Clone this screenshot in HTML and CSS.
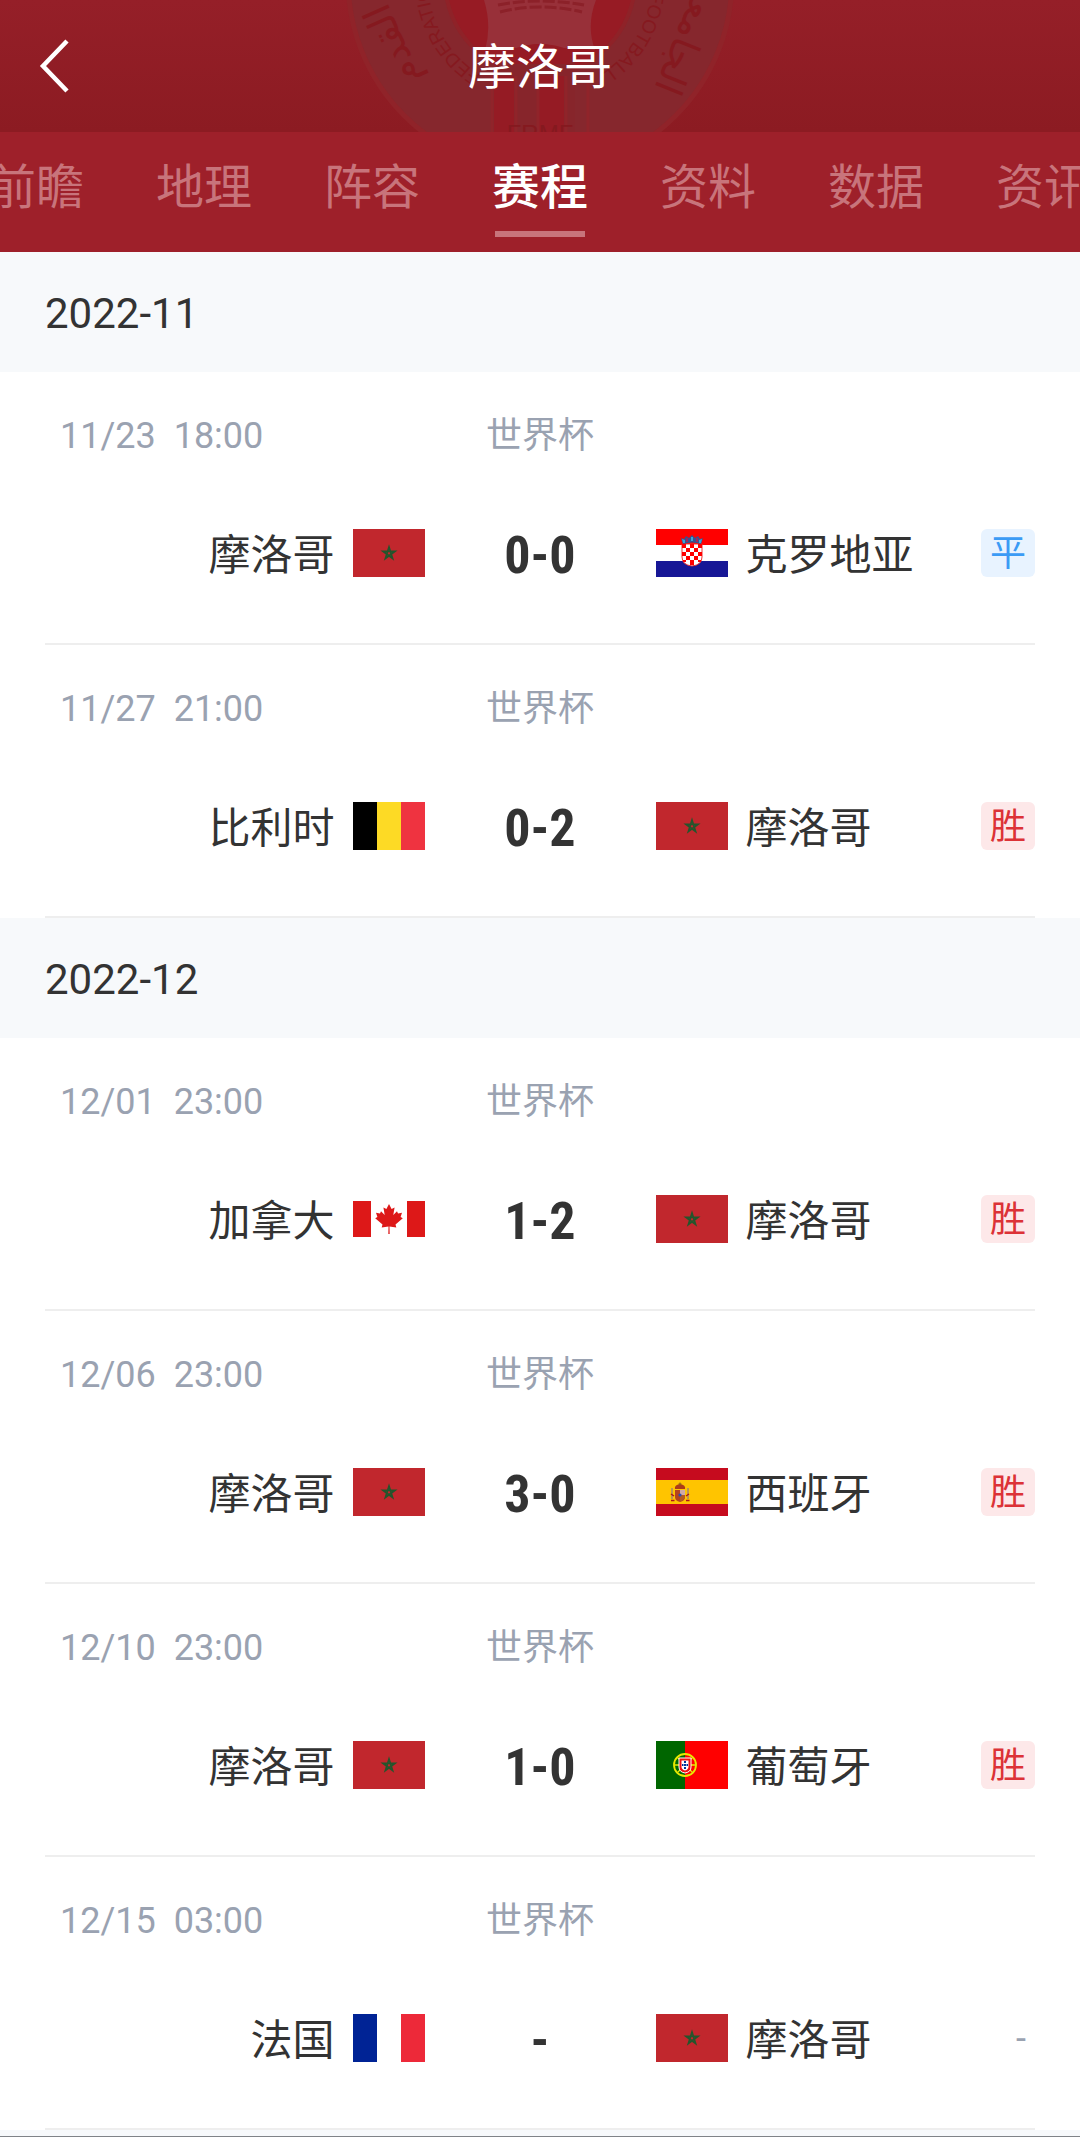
FILE: index.html
```html
<!DOCTYPE html>
<html lang="zh-CN">
<head>
<meta charset="utf-8">
<meta name="viewport" content="width=device-width, initial-scale=1">
<title>摩洛哥 赛程</title>
<link rel="stylesheet" href="styles.css">
</head>
<body>
<svg class="sprite" aria-hidden="true">
  <symbol id="flag-ma" viewBox="0 0 72 48">
    <rect width="72" height="48" fill="#c1272d"/>
    <path d="M36 18 L39.6 29.4 L30 22.3 L42 22.3 L32.4 29.4 Z" fill="none" stroke="#23552c" stroke-width="1.7"/>
  </symbol>
  <symbol id="flag-hr" viewBox="0 0 72 48">
    <rect width="72" height="48" fill="#fff"/>
    <rect width="72" height="16" fill="#f00"/>
    <rect y="32" width="72" height="16" fill="#171796"/>
    <path d="M26 15 V28 Q26 36 36 37 Q46 36 46 28 V15 Z" fill="#fff" stroke="#e33" stroke-width="1"/>
    <path d="M26 15h4v4h-4zM34 15h4v4h-4zM42 15h4v4h-4zM30 19h4v4h-4zM38 19h4v4h-4zM26 23h4v4h-4zM34 23h4v4h-4zM42 23h4v4h-4zM30 27h4v4h-4zM38 27h4v4h-4zM27 31h3v2h-3zM34 31h4v5h-4zM42 31h3v2h-3z" fill="#f00"/>
    <path d="M27 15 L25 9 L28 10 L30 7 L33 9 L36 6 L39 9 L42 7 L44 10 L47 9 L45 15 Q36 12 27 15 Z" fill="#35538f"/>
    <path d="M26 10l3 1v3l-2 0zM35 8h2v4h-2zM43 11l3-1-1 4h-2z" fill="#3aa5d8"/>
    <path d="M30 9h2v4h-2zM40 9h2v4h-2z" fill="#a3245c"/>
  </symbol>
  <symbol id="flag-be" viewBox="0 0 72 48">
    <rect width="24" height="48" fill="#000"/>
    <rect x="24" width="24" height="48" fill="#fdda25"/>
    <rect x="48" width="24" height="48" fill="#ef3340"/>
  </symbol>
  <symbol id="flag-ca" viewBox="0 0 72 48">
    <rect y="6" width="72" height="36" fill="#fff"/>
    <rect y="6" width="18" height="36" fill="#dd1818"/>
    <rect x="54" y="6" width="18" height="36" fill="#dd1818"/>
    <path d="M36 9 L38.6 14 L41.6 12.5 L40.3 20 L44 16.2 L45 18.4 L49 17.8 L47.6 22 L49.8 23.2 L42.5 29.6 L43.3 32.4 L36.5 31.5 L36.7 39 H35.3 L35.5 31.5 L28.7 32.4 L29.5 29.6 L22.2 23.2 L24.4 22 L23 17.8 L27 18.4 L28 16.2 L31.7 20 L30.4 12.5 L33.4 14 Z" fill="#dd1818"/>
  </symbol>
  <symbol id="flag-es" viewBox="0 0 72 48">
    <rect width="72" height="48" fill="#c60b1e"/>
    <rect y="12" width="72" height="24" fill="#ffc400"/>
    <path d="M16 20v11M32 20v11" stroke="#a9896a" stroke-width="1.6"/>
    <path d="M15 32.500h3.500M30 32.500h3.500M15 26l3 2M33 26l-3 2" stroke="#ad1519" stroke-width="1.400"/>
    <path d="M19 22h10v7q0 4-5 5q-5-1-5-5z" fill="#b4441f"/>
    <path d="M24 22h5v5h-5z" fill="#cfa9a6"/>
    <path d="M24 27h5v3l-3 3h-2z" fill="#b35b22"/>
    <circle cx="24" cy="27" r="1.600" fill="#2d4db0"/>
    <path d="M19 21q-1-4 5-5q6 1 5 5z" fill="#ad3a18"/>
    <path d="M24 14.500v3M22.500 16h3" stroke="#8a5a17"/>
  </symbol>
  <symbol id="flag-pt" viewBox="0 0 72 48">
    <rect width="72" height="48" fill="#f00"/>
    <rect width="29" height="48" fill="#060"/>
    <circle cx="29" cy="24" r="11" fill="none" stroke="#e8e800" stroke-width="1.800"/>
    <path d="M18 24h22M21 16q8 8 16 16M37 16q-8 8-16 16" stroke="#e8e800" stroke-width="1.300" fill="none"/>
    <path d="M23 17h12v9q0 5-6 6q-6-1-6-6z" fill="#e11" stroke="#fff" stroke-width="1"/>
    <path d="M25.500 19.500h7v6q0 3-3.500 4q-3.500-1-3.500-4z" fill="#fff"/>
    <path d="M28 20h2v2h-2zM28 23h2v2h-2zM28 26h2v2h-2zM26 23h1.500v2h-1.500zM30.500 23h1.500v2h-1.500z" fill="#039"/>
  </symbol>
  <symbol id="flag-fr" viewBox="0 0 72 48">
    <rect width="72" height="48" fill="#fff"/>
    <rect width="24" height="48" fill="#002395"/>
    <rect x="48" width="24" height="48" fill="#ed2939"/>
  </symbol>
</svg>

<header class="topbar">
  <svg class="crest" viewBox="0 0 400 132" aria-hidden="true">
    <defs>
      <path id="ring" d="M200 92 A112 112 0 0 1 200 -132 A112 112 0 0 1 200 92"/>
    </defs>
    <circle cx="200" cy="-20" r="192" fill="#86272d" stroke="#902329" stroke-width="5"/>
    <circle cx="200" cy="-20" r="95" fill="#971b24" stroke="#8f2228" stroke-width="4"/>
    <path d="M144 0 Q152 26 145 50 Q165 48 180 48 Q200 40 220 48 Q240 48 255 50 Q246 26 256 0 Z" fill="#983039"/>
    <path d="M158 5q42-8 86 0M160 12q40-10 82 0" fill="none" stroke="#8c2129" stroke-width="3" stroke-dasharray="12 3"/>
    <path d="M165 60 Q200 36 235 60 V132 H153 V70 Z" fill="#87252b"/>
    <path d="M154 76h20v56h-20zM199 76h25v56h-25zM170 50q30-12 60 0v14h-60z" fill="#951b24"/>
    <path d="M152 76v56M176 76v56M198 76v56M226 76v56M248 76v56" stroke="#90242a" stroke-width="3"/>
    <g class="crest-text">
      <text font-size="19"><textPath href="#ring" startOffset="62">FEDERATION</textPath></text>
      <text font-size="19" text-anchor="end"><textPath href="#ring" startOffset="638">FOOTBALL</textPath></text>
      <text x="200" y="142" font-size="24" text-anchor="middle">FRMF</text>
      <text class="arabic" font-size="38" text-anchor="middle" transform="translate(64 40) rotate(-114)">القدم</text>
      <text class="arabic" font-size="38" text-anchor="middle" transform="translate(336 34) rotate(112)">الجامعة</text>
    </g>
  </svg>
  <button class="back" type="button" aria-label="返回">
    <svg viewBox="0 0 30 54" width="30" height="54" aria-hidden="true"><path d="M28 2 L4 27 L28 52" fill="none" stroke="#fff" stroke-width="4.500"/></svg>
  </button>
  <h1 class="title">摩洛哥</h1>
</header>

<nav class="tabs">
  <a class="tab" href="#preview">前瞻</a>
  <a class="tab" href="#geo">地理</a>
  <a class="tab" href="#squad">阵容</a>
  <a class="tab active" href="#fixtures" aria-current="page">赛程</a>
  <a class="tab" href="#profile">资料</a>
  <a class="tab" href="#stats">数据</a>
  <a class="tab" href="#news">资讯</a>
</nav>

<main id="fixtures">
  <section>
    <h2 class="month">2022-11</h2>
    <article class="match">
      <div class="meta"><time class="date">11/23&nbsp; 18:00</time><span class="cup">世界杯</span></div>
      <div class="teams">
        <div class="home"><span class="name">摩洛哥</span><svg class="flag"><use href="#flag-ma"/></svg></div>
        <strong class="score">0-0</strong>
        <div class="away"><svg class="flag"><use href="#flag-hr"/></svg><span class="name">克罗地亚</span><span class="result draw">平</span></div>
      </div>
    </article>
    <article class="match">
      <div class="meta"><time class="date">11/27&nbsp; 21:00</time><span class="cup">世界杯</span></div>
      <div class="teams">
        <div class="home"><span class="name">比利时</span><svg class="flag"><use href="#flag-be"/></svg></div>
        <strong class="score">0-2</strong>
        <div class="away"><svg class="flag"><use href="#flag-ma"/></svg><span class="name">摩洛哥</span><span class="result win">胜</span></div>
      </div>
    </article>
  </section>
  <section>
    <h2 class="month">2022-12</h2>
    <article class="match">
      <div class="meta"><time class="date">12/01&nbsp; 23:00</time><span class="cup">世界杯</span></div>
      <div class="teams">
        <div class="home"><span class="name">加拿大</span><svg class="flag"><use href="#flag-ca"/></svg></div>
        <strong class="score">1-2</strong>
        <div class="away"><svg class="flag"><use href="#flag-ma"/></svg><span class="name">摩洛哥</span><span class="result win">胜</span></div>
      </div>
    </article>
    <article class="match">
      <div class="meta"><time class="date">12/06&nbsp; 23:00</time><span class="cup">世界杯</span></div>
      <div class="teams">
        <div class="home"><span class="name">摩洛哥</span><svg class="flag"><use href="#flag-ma"/></svg></div>
        <strong class="score">3-0</strong>
        <div class="away"><svg class="flag"><use href="#flag-es"/></svg><span class="name">西班牙</span><span class="result win">胜</span></div>
      </div>
    </article>
    <article class="match">
      <div class="meta"><time class="date">12/10&nbsp; 23:00</time><span class="cup">世界杯</span></div>
      <div class="teams">
        <div class="home"><span class="name">摩洛哥</span><svg class="flag"><use href="#flag-ma"/></svg></div>
        <strong class="score">1-0</strong>
        <div class="away"><svg class="flag"><use href="#flag-pt"/></svg><span class="name">葡萄牙</span><span class="result win">胜</span></div>
      </div>
    </article>
    <article class="match">
      <div class="meta"><time class="date">12/15&nbsp; 03:00</time><span class="cup">世界杯</span></div>
      <div class="teams">
        <div class="home"><span class="name">法国</span><svg class="flag"><use href="#flag-fr"/></svg></div>
        <strong class="score">-</strong>
        <div class="away"><svg class="flag"><use href="#flag-ma"/></svg><span class="name">摩洛哥</span><span class="result pending">-</span></div>
      </div>
    </article>
  </section>
</main>
<footer class="page-end"></footer>
</body>
</html>
```

FILE: styles.css
```css
* { box-sizing: border-box; }

body {
  margin: 0;
  background: #fff;
  color: #333;
  font-family: Roboto, "Noto Sans CJK SC", sans-serif;
}

.sprite { display: none; }

.topbar {
  position: relative;
  display: grid;
  grid-template-columns: 1fr auto 1fr;
  align-items: center;
  height: 132px;
  overflow: hidden;
  background: linear-gradient(#951f28, #8c1b22);
  color: #fff;
}

/* Watermark behind the title */
.crest {
  position: absolute;
  top: 0;
  left: 50%;
  width: 400px;
  height: 132px;
  margin-left: -200px;
}

.crest-text {
  fill: #85191f;
  font-family: "Liberation Sans", sans-serif;
}

.crest-text .arabic { font-family: "DejaVu Sans", sans-serif; }

.back {
  justify-self: start;
  display: flex;
  padding: 0 39px;
  border: 0;
  background: none;
}

.title {
  position: relative;
  margin: 0;
  padding-top: 4px;
  font-size: 48px;
  font-weight: 400;
  line-height: 60px;
}

.tabs {
  display: flex;
  justify-content: center;
  overflow: hidden;
  background: #9e202a;
}

.tab {
  flex: 0 0 168px;
  display: flex;
  flex-direction: column;
  align-items: center;
  height: 120px;
  padding-top: 32px;
  color: #c8747b;
  font-size: 48px;
  line-height: 48px;
  text-decoration: none;
}

.tab.active { color: #fff; font-weight: 500; }

.tab.active::after {
  content: "";
  width: 90px;
  height: 6px;
  margin-top: 19px;
  background: #c8747b;
}

.month {
  margin: 0;
  padding: 38px 45px 34px;
  background: #f7f9fb;
  font-size: 42px;
  font-weight: 400;
  line-height: 48px;
}

.match {
  margin: 0 45px;
  padding: 40px 0 66px;
  border-bottom: 2px solid #eee;
}

.meta {
  display: grid;
  grid-template-columns: 1fr auto 1fr;
  margin-bottom: 69px;
  color: #9aa2b1;
  font-size: 36px;
  line-height: 48px;
}

.date { padding-left: 15px; }

.teams {
  display: grid;
  grid-template-columns: 1fr 231px 1fr;
  align-items: center;
  font-size: 42px;
}

.home, .away {
  display: flex;
  align-items: center;
  gap: 18px;
}

.home { justify-content: flex-end; }

.flag {
  display: block;
  width: 72px;
  height: 48px;
}

.name, .score {
  padding-top: 6px;
  line-height: 42px;
}

.score {
  font-family: "Liberation Sans Narrow", "Roboto Condensed", Roboto, sans-serif;
  font-size: 52px;
  font-weight: 700;
  text-align: center;
}

.result {
  margin-left: auto;
  padding: 2px 9px 0;
  border-radius: 6px;
  font-size: 36px;
  line-height: 46px;
}

.draw { background: #e8f3ff; color: #3b9bf5; }
.win { background: #fde8e9; color: #dc3237; }
.pending { color: #9aa2b1; }

.page-end {
  height: 7px;
  border-bottom: 1px solid #808388;
  background: #f7f9fb;
}
```
